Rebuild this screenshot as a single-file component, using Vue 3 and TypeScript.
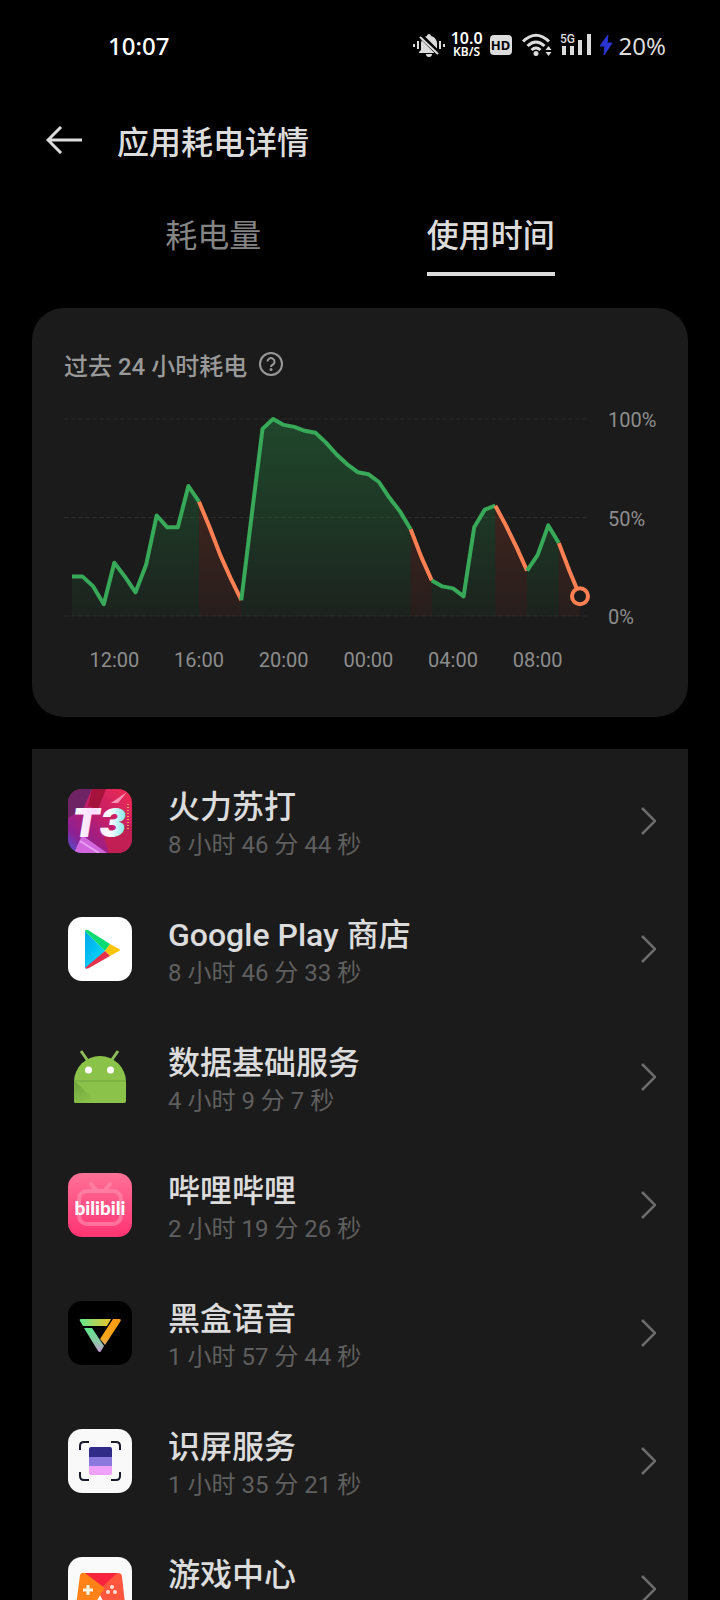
<script setup lang="ts">
import { ref } from 'vue'

type Tone = 'green' | 'orange'
interface AppUsage {
  id: string
  name: string
  time: string
}

const tabs = ['耗电量', '使用时间']
const activeTab = ref(1)

const apps: AppUsage[] = [
  { id: 't3', name: '火力苏打', time: '8 小时 46 分 44 秒' },
  { id: 'play', name: 'Google Play 商店', time: '8 小时 46 分 33 秒' },
  { id: 'android', name: '数据基础服务', time: '4 小时 9 分 7 秒' },
  { id: 'bili', name: '哔哩哔哩', time: '2 小时 19 分 26 秒' },
  { id: 'heybox', name: '黑盒语音', time: '1 小时 57 分 44 秒' },
  { id: 'screen', name: '识屏服务', time: '1 小时 35 分 21 秒' },
  { id: 'game', name: '游戏中心', time: '' },
]

// Battery level every half hour, starting at 10:00
const levels = [
  20, 20, 15, 6, 27, 20, 12, 26, 51, 45, 45, 66, 58, 45, 31, 19, 8, 52, 95, 100, 97, 96, 94, 93,
  88, 82, 77, 73, 72, 68, 60, 53, 44, 30, 18, 15, 14, 10, 45, 54, 56, 46, 35, 23, 31, 46, 37, 23, 10,
]
const spans: { from: number; to: number; tone: Tone }[] = [
  { from: 0, to: 12, tone: 'green' },
  { from: 12, to: 16, tone: 'orange' },
  { from: 16, to: 32, tone: 'green' },
  { from: 32, to: 34, tone: 'orange' },
  { from: 34, to: 40, tone: 'green' },
  { from: 40, to: 43, tone: 'orange' },
  { from: 43, to: 46, tone: 'green' },
  { from: 46, to: 48, tone: 'orange' },
]

const top = 11
const bottom = 208
const px = (i: number) => 8 + (i * 508) / 48
const py = (v: number) => bottom - (v / 100) * (bottom - top)

const series = spans.map((s) => {
  const pts = levels.slice(s.from, s.to + 1).map((v, k) => `${px(s.from + k).toFixed(1)},${py(v).toFixed(1)}`)
  return {
    ...s,
    line: pts.join(' '),
    area: `${px(s.from)},${bottom} ${pts.join(' ')} ${px(s.to)},${bottom}`,
  }
})
const hours = ['12:00', '16:00', '20:00', '00:00', '04:00', '08:00'].map((label, i) => ({ label, x: px(4 + i * 8) }))
const grid = [100, 50, 0].map((v) => ({ label: `${v}%`, y: py(v) }))
</script>

<template>
  <div class="page">
    <header class="status">
      <time class="clock">10:07</time>
      <div class="indicators">
        <svg class="bell" viewBox="0 0 32 24" aria-hidden="true">
          <path d="M16 1a2 2 0 0 1 2 2c4 1 6 4 6 8v6l2 2v1H6v-1l2-2v-6c0-4 2-7 6-8a2 2 0 0 1 2-2zM13 21h6a3 3 0 0 1-6 0z" fill="#dcdcdc" />
          <path d="M6 1 27 22" stroke="#000" stroke-width="5" />
          <path d="M7 4 25 21" stroke="#dcdcdc" stroke-width="2" />
          <path d="M1 11v3M5 8v8M27 8v8M31 11v3" stroke="#dcdcdc" stroke-width="2" />
        </svg>
        <div class="speed"><b>10.0</b><span>KB/S</span></div>
        <span class="hd">HD</span>
        <svg class="wifi" viewBox="0 0 30 24" aria-hidden="true">
          <g fill="none" stroke="#dcdcdc" stroke-width="3">
            <path d="M1 8.500Q14 -4 27 8.500" />
            <path d="M5.500 13Q14 5 22.500 13" />
            <path d="M9.500 17Q14 13 18.500 17" />
          </g>
          <circle cx="14" cy="20.500" r="2.500" fill="#dcdcdc" />
          <path d="m26.500 13 3 4h-6zM26.500 23l3-4h-6z" fill="#dcdcdc" />
        </svg>
        <svg class="signal" viewBox="0 0 32 24" aria-hidden="true">
          <path d="M2 13h4v9H2zM10 13h4v9h-4zM18 7h4v15h-4zM27 1h4v21h-4z" fill="#dcdcdc" />
          <text x="0" y="10" class="net">5G</text>
        </svg>
        <svg class="bolt" viewBox="0 0 14 22" aria-hidden="true"><path d="M9 1 1 12h5l-1 9 8-12H8z" fill="#2b36d2" stroke="#2b36d2" /></svg>
        <span class="battery">20%</span>
      </div>
    </header>

    <div class="titlebar">
      <button class="back" type="button" aria-label="返回">
        <svg viewBox="0 0 36 28" aria-hidden="true"><path d="M15 1 2 14l13 13M2 14h34" fill="none" stroke="#dcdcdc" stroke-width="3" /></svg>
      </button>
      <h1>应用耗电详情</h1>
    </div>

    <nav class="tabs" role="tablist">
      <button
        v-for="(tab, i) in tabs"
        :key="tab"
        type="button"
        role="tab"
        :aria-selected="activeTab === i"
        :class="{ active: activeTab === i }"
        @click="activeTab = i"
      >{{ tab }}</button>
    </nav>

    <main>
      <section class="card">
        <div class="heading">
          <h2>过去 24 小时耗电</h2>
          <button class="help" type="button" aria-label="说明">
            <svg viewBox="0 0 26 26" aria-hidden="true">
              <g fill="none" stroke="#999" stroke-width="2">
                <circle cx="13" cy="13" r="11" />
                <path d="M9.500 10.500a3.500 3.500 0 1 1 5.500 3q-2 1-2 2.500" />
              </g>
              <circle cx="13" cy="18.500" r="1.500" fill="#999" />
            </svg>
          </button>
        </div>
        <svg class="chart" viewBox="0 0 592 269" role="img" aria-label="过去 24 小时电量">
          <defs>
            <linearGradient id="green" gradientUnits="userSpaceOnUse" x1="0" y1="11" x2="0" y2="208">
              <stop offset="0" stop-color="#2aad50" stop-opacity=".3" />
              <stop offset=".5" stop-color="#2aad50" stop-opacity=".19" />
              <stop offset="1" stop-color="#2aad50" stop-opacity=".05" />
            </linearGradient>
            <linearGradient id="orange" gradientUnits="userSpaceOnUse" x1="0" y1="11" x2="0" y2="208">
              <stop offset="0" stop-color="#ff5530" stop-opacity=".25" />
              <stop offset="1" stop-color="#ff5530" stop-opacity=".05" />
            </linearGradient>
          </defs>
          <g v-for="g in grid" :key="g.label">
            <line class="rule" x1="0" x2="525" :y1="g.y" :y2="g.y" />
            <text x="544" :y="g.y + 8">{{ g.label }}</text>
          </g>
          <polygon v-for="s in series" :key="'a' + s.from" :points="s.area" :fill="`url(#${s.tone})`" />
          <polyline v-for="s in series" :key="'l' + s.from" :points="s.line" :class="['line', s.tone]" />
          <circle cx="516" :cy="py(10)" r="8" fill="#1b1b1b" stroke="#fd8053" stroke-width="4" />
          <text v-for="h in hours" :key="h.label" :x="h.x" y="259" text-anchor="middle">{{ h.label }}</text>
        </svg>
      </section>

      <ul class="list">
        <li v-for="app in apps" :key="app.id">
          <a class="row" href="#">
            <svg class="icon" viewBox="0 0 64 64" aria-hidden="true">
              <g v-if="app.id === 't3'">
                <defs>
                  <linearGradient id="t3bg" x1="0" y1="1" x2="1" y2="0">
                    <stop offset="0" stop-color="#4d55d8" />
                    <stop offset=".2" stop-color="#8d1f91" />
                    <stop offset=".55" stop-color="#c31e68" />
                    <stop offset="1" stop-color="#f02b50" />
                  </linearGradient>
                  <linearGradient id="t3fg"><stop offset="0" stop-color="#fff" /><stop offset=".4" stop-color="#fbdcff" /><stop offset=".7" stop-color="#fff" /><stop offset="1" stop-color="#7de8ee" /></linearGradient>
                  <clipPath id="round"><rect width="64" height="64" rx="14" /></clipPath>
                </defs>
                <g clip-path="url(#round)">
                  <rect width="64" height="64" fill="url(#t3bg)" />
                  <path d="M0 0h24l-9 20-15 9z" fill="#6e2464" />
                  <path d="M24 0h14l-8 20-10-3z" fill="#a5123b" />
                  <path d="M6 64 14 46l25 18z" fill="#d267dd" />
                  <path d="m35 45 29-10v29H41z" fill="#c22055" />
                  <path d="m43 14 16-11-9 11z" fill="#ff92b5" />
                  <path d="m12 52 19 12" stroke="#e9a0f5" stroke-width="2" />
                  <path d="M60 15v25" stroke="#ffa060" stroke-width="2" stroke-dasharray="1 2" />
                </g>
                <text x="31" y="48" class="t3">T3</text>
              </g>
              <g v-else-if="app.id === 'play'">
                <defs><linearGradient id="pb" x1="0" y1="0" x2="1" y2="1"><stop offset="0" stop-color="#00a5e8" /><stop offset="1" stop-color="#00e2ff" /></linearGradient></defs>
                <rect width="64" height="64" rx="14" fill="#fff" />
                <path d="m17 14 20 20-19 18q-1-1-1-3z" fill="url(#pb)" />
                <path d="M17 14q1-2 3-1l22 14-5 7z" fill="#08db72" />
                <path d="m42 27 9 5q2 1 0 2l-9 5-5-5z" fill="#fdc400" />
                <path d="m37 34 5 5-21 12q-2 1-4 0z" fill="#e5324a" />
              </g>
              <g v-else-if="app.id === 'android'">
                <defs><linearGradient id="as" x1="0" y1="0" x2=".6" y2="1"><stop offset="0" stop-color="#6fa23e" /><stop offset="1" stop-color="#8bc34a" /></linearGradient></defs>
                <path d="m13 6 7 10M50 6l-7 10" stroke="#8bbd5c" stroke-width="3" />
                <path d="M6 37a26 26 0 0 1 52 0v19q0 2-2 2H8q-2 0-2-2z" fill="#8bc34a" />
                <path d="m8 37 21 21H8q-2 0-2-2V37z" fill="url(#as)" />
                <path d="M6 36h52" stroke="#71a33f" />
                <circle cx="20.500" cy="25" r="3.500" fill="#fff" /><circle cx="42.500" cy="25" r="3.500" fill="#fff" />
              </g>
              <g v-else-if="app.id === 'bili'">
                <defs><linearGradient id="bl" x1="0" y1="0" x2="0" y2="1"><stop offset="0" stop-color="#ff7096" /><stop offset="1" stop-color="#ff3473" /></linearGradient></defs>
                <rect width="64" height="64" rx="14" fill="url(#bl)" />
                <g fill="none" stroke="#ff8daf" stroke-width="4" stroke-linecap="round" opacity=".65">
                  <rect x="11" y="18" width="42" height="33" rx="8" /><path d="m23 11 5 6M42 11l-5 6" />
                </g>
                <text x="32" y="42" class="bili">bilibili</text>
              </g>
              <g v-else-if="app.id === 'heybox'">
                <defs>
                  <linearGradient id="ha"><stop offset="0" stop-color="#61e990" /><stop offset="1" stop-color="#ecc329" /></linearGradient>
                  <linearGradient id="hb" x1="0" y1="0" x2="0" y2="1"><stop offset="0" stop-color="#60e88b" /><stop offset=".6" stop-color="#8fc6a8" /><stop offset="1" stop-color="#c39cd4" /></linearGradient>
                  <linearGradient id="hc" x1="0" y1="0" x2="0" y2="1"><stop offset="0" stop-color="#ff9c12" /><stop offset=".7" stop-color="#faa51a" /><stop offset="1" stop-color="#dcae70" /></linearGradient>
                </defs>
                <rect width="64" height="64" rx="14" fill="#000" />
                <path d="M13 18h30l-4 7H15l-3-5q-1-2 1-2z" fill="url(#ha)" />
                <path d="M16 27h8l12 18-3 5q-1 2-3 0z" fill="url(#hb)" />
                <path d="M45 18h6q3 0 1 3L37 44l-5-6z" fill="url(#hc)" />
              </g>
              <g v-else-if="app.id === 'screen'">
                <rect width="64" height="64" rx="14" fill="#f9f9fa" />
                <path d="M12 21v-4q0-4 4-4h5M43 13h5q4 0 4 4v4M12 43v4q0 4 4 4h5M43 51h5q4 0 4-4v-4" fill="none" stroke="#17192d" stroke-width="2" />
                <path d="M21 28v-8q0-2 2-2h19q2 0 2 2v8z" fill="#302b87" />
                <path d="M21 28h23v9H21z" fill="#8a78dc" />
                <path d="M21 37h23v7q0 2-2 2H23q-2 0-2-2z" fill="#efa0f8" />
              </g>
              <g v-else>
                <rect width="64" height="64" rx="14" fill="#fafafa" />
                <path d="M14 16h36l-18 20z" fill="#f8243f" />
                <path d="M50 16q4 0 4 4l5 44H45L30 34l18-17z" fill="#ff563e" />
                <path d="M12 18q1-3 5-2l17 13q4 3 0 6L17 64H6z" fill="#ff8218" />
                <path d="M20 28v10M15 33h10" stroke="#fff3e5" stroke-width="3" />
                <g fill="#ffe0d9"><circle cx="44" cy="30" r="2" /><circle cx="40" cy="35" r="2" /><circle cx="47" cy="35" r="2" /></g>
              </g>
            </svg>
            <span class="info">
              <span class="name">{{ app.name }}</span>
              <span class="time">{{ app.time }}</span>
            </span>
            <svg class="chevron" viewBox="0 0 16 28" aria-hidden="true"><path d="m2 1 13 13L2 27" fill="none" stroke="#6c6c6c" stroke-width="2.500" /></svg>
          </a>
        </li>
      </ul>
    </main>
  </div>
</template>

<style>
html,
body {
  margin: 0;
  background: #000;
}
</style>

<style scoped>
.page {
  box-sizing: border-box;
  height: 100vh;
  overflow-y: auto;
  scrollbar-width: none;
  background: #000;
  color: #dcdcdc;
  font-family: Roboto, 'Noto Sans CJK SC', sans-serif;
}
button {
  padding: 0;
  border: 0;
  background: none;
  color: inherit;
  font: inherit;
  cursor: pointer;
}
h1,
h2 {
  margin: 0;
  font-weight: 500;
}
svg {
  display: block;
  flex: none;
}
.status {
  display: flex;
  align-items: center;
  justify-content: space-between;
  height: 90px;
  padding: 0 54px 0 108px;
  font: 500 24px 'Noto Sans', sans-serif;
}
.clock {
  color: #fff;
}
.indicators {
  display: flex;
  align-items: center;
}
.bell {
  width: 32px;
  height: 24px;
  margin-right: 6px;
}
.speed {
  display: flex;
  flex-direction: column;
  align-items: center;
  width: 32px;
  margin-right: 7px;
  color: #fff;
  font-size: 16px;
  line-height: 13px;
}
.speed b {
  font-weight: 600;
}
.speed span {
  font-size: 12px;
  font-weight: 600;
}
.hd {
  width: 22px;
  margin-right: 10px;
  border-radius: 4px;
  background: #dcdcdc;
  color: #000;
  font: 700 13px/20px 'Noto Sans', sans-serif;
  text-align: center;
}
.wifi {
  width: 30px;
  height: 24px;
  margin-right: 8px;
}
.signal {
  width: 32px;
  height: 24px;
  margin-right: 7px;
}
.net {
  fill: #dcdcdc;
  stroke: #000;
  stroke-width: 2px;
  paint-order: stroke;
  font: 500 12px Roboto, sans-serif;
}
.bolt {
  width: 14px;
  height: 22px;
  margin-right: 6px;
}
.battery {
  font-weight: 400;
}
.titlebar {
  display: flex;
  align-items: center;
  gap: 35px;
  height: 100px;
  padding: 0 46px;
}
.back svg {
  width: 36px;
  height: 28px;
}
h1 {
  font-size: 32px;
}
.tabs {
  display: flex;
  justify-content: space-evenly;
  height: 86px;
  margin-bottom: 32px;
}
.tabs button {
  padding-top: 10px;
  border-bottom: 4px solid transparent;
  color: #858585;
  font-size: 32px;
  line-height: 72px;
}
.tabs .active {
  border-color: #dcdcdc;
  color: #dcdcdc;
  font-weight: 500;
}
main {
  display: flex;
  flex-direction: column;
  gap: 32px;
  padding: 0 32px;
}
.card {
  padding: 40px 32px;
  border-radius: 32px;
  background: #1b1b1b;
}
.heading {
  display: flex;
  align-items: center;
  gap: 11px;
  height: 32px;
  margin-bottom: 28px;
  color: #999;
}
h2 {
  font-size: 24px;
}
.help svg {
  width: 26px;
  height: 26px;
}
.chart {
  width: 100%;
}
.chart text {
  fill: #8d8d8d;
  font-size: 20px;
}
.rule {
  stroke: #2b2b2b;
  stroke-dasharray: 5 2;
}
.line {
  fill: none;
  stroke-width: 4px;
  stroke-linejoin: round;
}
.line.green {
  stroke: #38a958;
}
.line.orange {
  stroke: #fd8053;
}
.list {
  margin: 0;
  padding: 8px 0;
  background: #1b1b1b;
  list-style: none;
}
.row {
  display: flex;
  align-items: center;
  gap: 36px;
  height: 128px;
  padding: 0 32px 0 36px;
  color: inherit;
  text-decoration: none;
}
.icon {
  width: 64px;
  height: 64px;
}
.t3 {
  fill: url(#t3fg);
  font: italic 900 40px Inter, sans-serif;
  text-anchor: middle;
}
.bili {
  fill: #fff;
  font: 900 19px Lato, sans-serif;
  text-anchor: middle;
}
.info {
  display: flex;
  flex: 1;
  flex-direction: column;
  padding-top: 8px;
}
.name {
  font-size: 32px;
  font-weight: 500;
  line-height: 40px;
}
.time {
  min-height: 36px;
  color: #5f5f5f;
  font-size: 24px;
  line-height: 36px;
}
.chevron {
  width: 16px;
  height: 28px;
}
</style>
